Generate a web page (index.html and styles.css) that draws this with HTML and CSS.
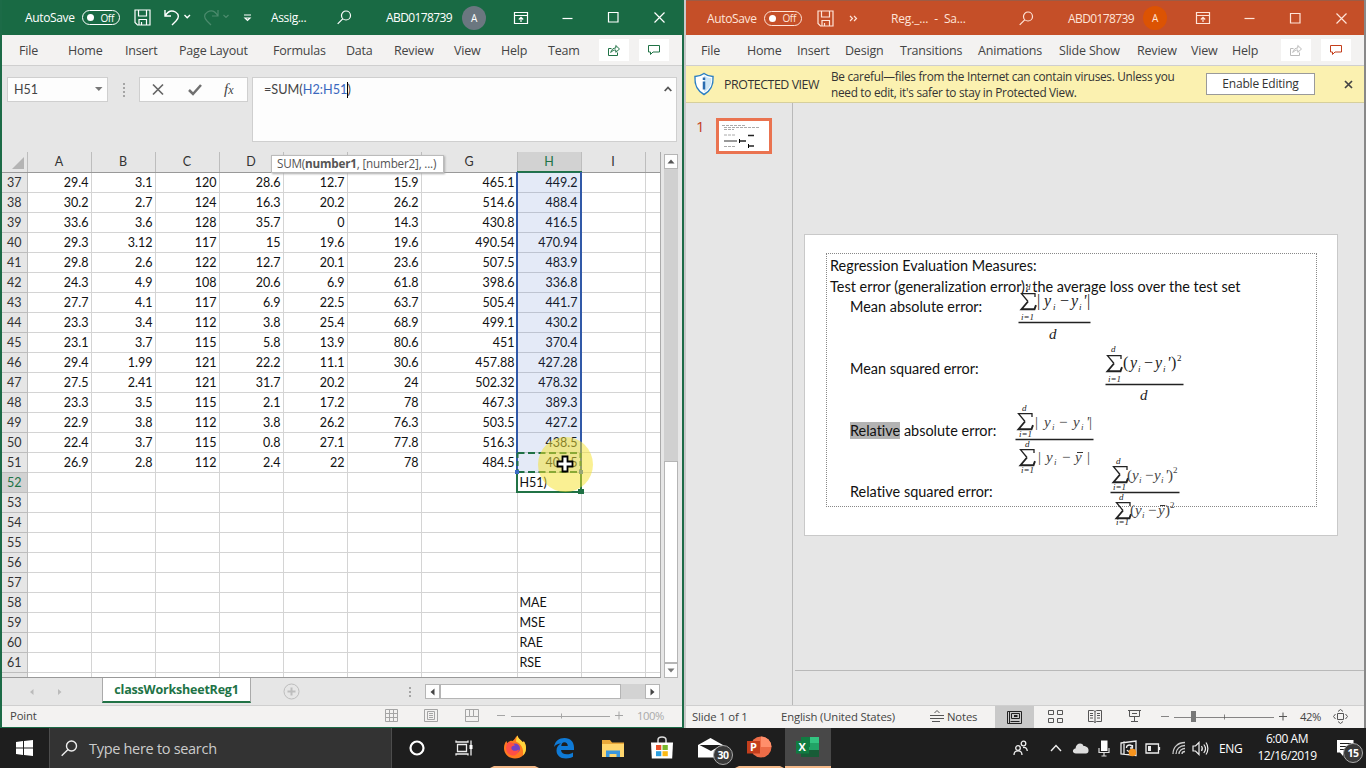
FILE: index.html
```html
<!DOCTYPE html>
<html lang="en">
<head>
<meta charset="utf-8">
<title>Desktop</title>
<link rel="stylesheet" href="styles.css">
</head>
<body>
<svg width="0" height="0" class="defs">
  <defs>
    <g id="i-save"><path d="M1 1h15v15H3.500L1 13.500z M4.500 1v6h8V1 M5 16v-5.500h7.500V16 M7.500 13v3"/></g>
    <g id="i-search"><circle cx="9" cy="5.500" r="4.500"/><path d="M5.700 8.800L.7 13.800"/></g>
    <g id="i-ribbon"><path d="M.5.500h13v11H.5z M.5 3.500h13 M7 10V5.500 M4.800 7.500L7 5.300l2.200 2.200"/></g>
    <g id="i-share"><path d="M3.500 4.500h-3v7h9V8.500 M2.800 8.500c.5-3 2.500-4.500 5-4.500V1.500L11.500 5 7.800 8.300V6c-2 0-3.500.5-5 2.500z"/></g>
    <g id="i-comment"><path d="M.5.500h11v6.500H5L2.500 9.500V7h-2z"/></g>
  </defs>
</svg>
<div class="desktop">
 <div class="windows">
  <section class="excel">
    <header class="title xl-title">
      <span class="as">AutoSave</span>
      <span class="toggle"><i></i>Off</span>
      <svg class="ic" width="17" height="17"><use href="#i-save"/></svg>
      <svg class="ic" width="28" height="17"><path d="M1 1v6h6 M1 7C4 2 8 1 11.500 3c4 2.500 3.500 6 .5 9l-4 4 M20.500 6l2.700 2.700L26 6" stroke-width="1.400"/></svg>
      <svg class="ic faint" width="28" height="17"><path d="M15 1v6H9 M15 7C12 2 8 1 4.500 3c-4 2.500-3.500 6-.5 9l4 4 M20.500 6l2.500 2.500L25.500 6"/></svg>
      <svg class="ic" width="9" height="8"><path d="M1 1h7 M2 4l2.500 2.500L7 4z"/></svg>
      <span class="doc">Assig...</span>
      <svg class="ic" width="15" height="15"><use href="#i-search"/></svg>
      <span class="user">ABD0178739</span>
      <b class="avatar">A</b>
      <svg class="ic" width="14" height="12"><use href="#i-ribbon"/></svg>
      <svg class="ic" width="11" height="12"><path d="M.5 6.500h10"/></svg>
      <svg class="ic" width="11" height="11"><path d="M.5.500h9.500v9.500H.5z"/></svg>
      <svg class="ic" width="11" height="11"><path d="M.5.500l10 10M10.500.500l-10 10"/></svg>
    </header>
    <nav class="menu xl-menu">
      <span>File</span><span>Home</span><span>Insert</span><span>Page Layout</span><span>Formulas</span><span>Data</span><span>Review</span><span>View</span><span>Help</span><span>Team</span>
      <b class="btn"><svg width="12" height="12"><use href="#i-share"/></svg></b>
      <b class="btn"><svg width="12" height="10"><use href="#i-comment"/></svg></b>
    </nav>
    <div class="formula">
      <div class="namebox"><span>H51</span><svg width="8" height="5"><path d="M0 0h7.500L3.800 4z" fill="#777"/></svg></div>
      <div class="dots"><i></i><i></i><i></i><i></i></div>
      <div class="fx">
        <svg width="12" height="11"><path d="M1 .5l10 10M11 .5l-10 10" stroke="#666" stroke-width="1.700" fill="none"/></svg>
        <svg width="14" height="11"><path d="M1 6l4 4 8-9" stroke="#707070" stroke-width="2.500" fill="none"/></svg>
        <em>f<small>x</small></em>
      </div>
      <div class="input"><span class="cal">=SUM(<i>H2:H51</i><u></u>)</span><svg width="8" height="6"><path d="M.7 5L4 1.500 7.300 5" fill="none" stroke="#555" stroke-width="1.800"/></svg></div>
      <div class="tip">SUM(<b>number1</b>, [number2], ...)</div>
    </div>
    <div class="sheetwrap">
      <div class="sheet">
        <table class="cells">
          <colgroup><col class="c0"><col class="c1"><col class="c1"><col class="c1"><col class="c1"><col class="c1"><col class="c6"><col class="c7"><col class="c1"><col class="c1"><col class="c10"></colgroup>
          <thead><tr><th class="corner"><svg width="12" height="12"><path d="M12 0v12H0z" fill="#b4b4b4"/></svg></th><th>A</th><th>B</th><th>C</th><th>D</th><th></th><th></th><th>G</th><th class="on">H</th><th>I</th><th></th></tr></thead>
          <tbody id="rows"></tbody>
        </table>
        <div class="range"></div>
        <div class="active"></div>
        <svg class="ants" width="68" height="44"><path d="M2.500 2h63 M2.500 21h63" stroke="#1f7145" stroke-width="2" stroke-dasharray="7 3.500"/><path d="M2.500 2v19 M65.500 2v19" stroke="#1f7145" stroke-width="2" stroke-dasharray="5 3"/><path d="M0 19h4v4H0z M64 19h4v4h-4z" fill="#3b6cc4"/><path d="M63 38h6v5h-6z" fill="#1f7145"/></svg>
        <div class="halo"></div>
        <svg class="cursor" width="18" height="18"><path d="M6.500 1.500h5v5h5v5h-5v5h-5v-5h-5v-5h5z" fill="#fff" stroke="#000" stroke-width="1.800"/></svg>
      </div>
      <div class="vscroll">
        <b><svg width="8" height="5"><path d="M4 .5L7.500 4.500h-7z" fill="#555"/></svg></b>
        <i></i><u></u>
        <b><svg width="8" height="5"><path d="M4 4.500L7.500.500h-7z" fill="#777"/></svg></b>
      </div>
    </div>
    <div class="tabs">
      <svg class="arrows" width="34" height="8"><path d="M4.500 1v6L1 4z M29 1v6l3.500-3z" fill="#bbb"/></svg>
      <b class="tab">classWorksheetReg1</b>
      <svg class="plus" width="17" height="17"><g fill="none" stroke="#bdbdbd"><circle cx="8.500" cy="8.500" r="7.500"/><path d="M8.500 4.500v8M4.500 8.500h8" stroke-width="2"/></g></svg>
      <div class="dots"><i></i><i></i><i></i></div>
      <div class="hscroll">
        <b><svg width="5" height="8"><path d="M4.500.500v7L.5 4z" fill="#444"/></svg></b><i></i><u></u>
        <b><svg width="5" height="8"><path d="M.5.500v7L4.500 4z" fill="#444"/></svg></b>
      </div>
    </div>
    <footer class="status xl-status">
      <span>Point</span>
      <svg width="13" height="13"><path d="M.5.500h12v12H.5zM.5 4.500h12M.5 8.500h12M4.500.500v12M8.500.500v12"/></svg>
      <svg width="14" height="13"><path d="M.5.500h13v12H.5zM3.500 2.500h7v8h-7zM5 4.500h4M5 6.500h4M5 8.500h4"/></svg>
      <svg width="14" height="13"><path d="M.5.500h13v12H.5zM4.500.500v7h-4M8.500.500v7h-4M8.500 7.500h5"/></svg>
      <svg width="127" height="13"><path d="M0 6.500h8M14 7.500h99M64.500 4.500v5M118 6.500h8M122 2.500v8"/></svg>
      <span class="pct">100%</span>
    </footer>
  </section>

  <section class="ppt">
    <header class="title pp-title">
      <span class="as">AutoSave</span>
      <span class="toggle"><i></i>Off</span>
      <svg class="ic" width="17" height="17"><use href="#i-save"/></svg>
      <svg class="ic" width="9" height="7"><path d="M1 1l2.500 2.500L1 6M5 1l2.500 2.500L5 6"/></svg>
      <span class="doc">Reg._...&nbsp; -&nbsp; Sa...</span>
      <svg class="ic" width="15" height="15"><use href="#i-search"/></svg>
      <span class="user">ABD0178739</span>
      <b class="avatar">A</b>
      <svg class="ic" width="14" height="12"><use href="#i-ribbon"/></svg>
      <svg class="ic" width="11" height="12"><path d="M.5 6.500h10"/></svg>
      <svg class="ic" width="11" height="11"><path d="M.5.500h9.500v9.500H.5z"/></svg>
      <svg class="ic" width="11" height="11"><path d="M.5.500l10 10M10.500.500l-10 10"/></svg>
    </header>
    <nav class="menu pp-menu">
      <span>File</span><span>Home</span><span>Insert</span><span>Design</span><span>Transitions</span><span>Animations</span><span>Slide Show</span><span>Review</span><span>View</span><span>Help</span>
      <b class="btn off"><svg width="12" height="12"><use href="#i-share"/></svg></b>
      <b class="btn"><svg width="12" height="10"><use href="#i-comment"/></svg></b>
    </nav>
    <div class="protect">
      <svg width="22" height="24"><path d="M11 1.500c3 2.200 6 3 9 3 .5 9-2 14-9 18-7-4-9.500-9-9-18 3 0 6-.8 9-3z" fill="#fff" stroke="#2b7fc3" stroke-width="1.500"/><path d="M11 3.500c2.500 1.700 4.800 2.500 7.300 2.600.2 7-1.800 11-7.300 14.200z" fill="#cfe6f5"/><path d="M11 9.500v8M11 5.500v2.500" stroke="#2b6cb0" stroke-width="2.500"/></svg>
      <span class="pv">PROTECTED VIEW</span>
      <span class="msg">Be careful—files from the Internet can contain viruses. Unless you<br>need to edit, it's safer to stay in Protected View.</span>
      <span class="enable">Enable Editing</span>
      <svg width="9" height="9"><path d="M1 1l7 7M8 1L1 8" stroke="#444" stroke-width="1.700"/></svg>
    </div>
    <div class="work">
      <aside class="thumbs"><span>1</span>
        <svg width="56" height="36"><path d="M1.500 1.500h53v33h-53z" fill="#fff" stroke="#ea7350" stroke-width="3"/><path d="M6 7.500h24M8 9.500h35M8 11.500h10" stroke="#aaa" stroke-dasharray="3 1"/><path d="M8 17h12M8 28.500h11" stroke="#aaa" stroke-dasharray="3 1"/><path d="M8 23h13" stroke="#333"/><path d="M32 17.500h6M23 23h7M32 28h6" stroke="#222" stroke-width="1.700"/><path d="M23.500 21v4M32.500 26v4" stroke="#000"/></svg>
      </aside>
      <div class="stage">
        <div class="canvas">
          <div class="slide">
            <div class="phold"></div>
            <p class="l1">Regression Evaluation Measures:</p>
            <p class="l2">Test error (generalization error): the average loss over the test set</p>
            <p class="l3">Mean absolute error:</p>
            <p class="l4">Mean squared error:</p>
            <p class="l5"><mark>Relative</mark> absolute error:</p>
            <p class="l6">Relative squared error:</p>
            <svg class="eq" width="531" height="299" viewBox="805 236 531 299">
              <g stroke="#222" stroke-width="1.300"><path d="M1018.500 323.500h72M1105.500 385.500h78M1015.500 440.500h78M1110.500 493.500h69"/></g>
              <g class="sg"><use href="#sg" x="1020" y="294"/><use href="#sg" x="1106" y="356"/><use href="#sg" x="1017" y="414"/><use href="#sg" x="1019" y="450"/><use href="#sg" x="1112" y="467"/><use href="#sg" x="1115" y="503"/></g>
              <g class="m s"><text x="1026" y="291">d</text><text x="1111" y="353">d</text><text x="1022" y="412">d</text><text x="1025" y="448">d</text><text x="1116" y="465">d</text><text x="1119" y="501">d</text></g>
              <g class="m s"><text x="1021" y="321">i=1</text><text x="1108" y="383">i=1</text><text x="1019" y="438">i=1</text><text x="1021" y="474">i=1</text><text x="1113" y="491">i=1</text><text x="1116" y="526">i=1</text></g>
              <g class="m"><text x="1049" y="340">d</text><text x="1140" y="401">d</text></g>
              <g class="m y"><text x="1037" y="307"><tspan class="r">|</tspan></text><text x="1044" y="307">y</text><text x="1059" y="307">−</text><text x="1071" y="307">y</text><text x="1083" y="307">'</text><text x="1087" y="307"><tspan class="r">|</tspan></text>
              <text x="1123" y="369"><tspan class="r">(</tspan></text><text x="1130" y="369">y</text><text x="1143" y="369">−</text><text x="1155" y="369">y</text><text x="1167" y="369">'</text><text x="1171" y="369"><tspan class="r">)</tspan></text></g>
              <g class="m s"><text x="1053" y="311">i</text><text x="1079" y="311">i</text><text x="1138" y="373">i</text><text x="1163" y="373">i</text><text x="1177" y="362" class="r">2</text></g>
              <g class="m y g"><text x="1035" y="428"><tspan class="r">|</tspan></text><text x="1044" y="428">y</text><text x="1058" y="428">−</text><text x="1073" y="428">y</text><text x="1086" y="428">'</text><text x="1089" y="428"><tspan class="r">|</tspan></text>
              <text x="1038" y="463"><tspan class="r">|</tspan></text><text x="1046" y="463">y</text><text x="1061" y="463">−</text><text x="1075" y="463">y</text><text x="1087" y="463"><tspan class="r">|</tspan></text>
              <text x="1127" y="481"><tspan class="r">(</tspan></text><text x="1132" y="481">y</text><text x="1144" y="481">−</text><text x="1154" y="481">y</text><text x="1165" y="481">'</text><text x="1168" y="481"><tspan class="r">)</tspan></text>
              <text x="1130" y="516"><tspan class="r">(</tspan></text><text x="1135" y="516">y</text><text x="1147" y="516">−</text><text x="1158" y="516">y</text><text x="1165" y="516"><tspan class="r">)</tspan></text></g>
              <g class="m s g"><text x="1052" y="431">i</text><text x="1081" y="431">i</text><text x="1054" y="466">i</text><text x="1139" y="484">i</text><text x="1161" y="484">i</text><text x="1142" y="519">i</text><text x="1173" y="474" class="r">2</text><text x="1170" y="509" class="r">2</text></g>
              <path d="M1077 453.500h6M1160 506.500h5" stroke="#333"/>
              <defs><g id="sg" fill="none"><path d="M15 4V.7H1.500L8 8.500"/><path d="M8 8.500L1.500 16.200H14.500l1.500-4" stroke-width="1.900"/></g></defs>
            </svg>
          </div>
        </div>
        <div class="notes"></div>
      </div>
    </div>
    <footer class="status pp-status">
      <span>Slide 1 of 1</span><span class="lang">English (United States)</span>
      <svg width="15" height="12"><path d="M0 5.500h14M0 8.500h14M2 11.500h8M4.500 3l2.500-2.500L9.500 3"/></svg><span>Notes</span>
      <b><svg width="15" height="13"><path d="M.5.500h14v12H.5zM4.500 2.500h8v5h-8zM3.500 10.500h9M7 4.500h3.500M7 5.500h3.500M2.500.500v12" stroke="#222"/></svg></b>
      <svg width="15" height="13"><path d="M.5.500h5v4h-5zM9.500.500h5v4h-5zM.5 8.500h5v4h-5zM9.500 8.500h5v4h-5z"/></svg>
      <svg width="14" height="13"><path d="M.5.500h5l1.500 1 1.500-1h5v11h-5L7 12.500l-1.500-1h-5zM7 1.500v11M2 3.500h3M2 5.500h3M2 8h3M9 3.500h3M9 5.500h3M9 8h3"/></svg>
      <svg width="14" height="13"><path d="M0 .5h13M1.500.500v6h10v-6M4 3.500h5M6.500 6.500v5M3 11.500h7"/></svg>
      <svg width="114" height="13"><path d="M0 6.500h8M13 7.500h100M63.500 4.500v5" opacity=".7"/><path d="M30 1h5v11h-5z" fill="#777" stroke="none"/></svg>
      <svg width="9" height="13"><path d="M0 6.500h8M4 2.500v8"/></svg>
      <span class="pct">42%</span>
      <svg width="15" height="15"><path d="M4.500 4.500h6v6h-6zM5 2.500L7.500.500 10 2.500M5 12.500l2.500 2 2.500-2M2.500 5L.5 7.500l2 2.500M12.500 5l2 2.500-2 2.500"/></svg>
    </footer>
  </section>
 </div>

 <div class="taskbar">
  <div class="start"><svg width="17" height="16"><path d="M0 2l7-1v6.500H0zM8 .9L17 0v7.500H8zM0 8.500h7V15l-7-1zM8 8.500h9V16l-9-1.100z" fill="#fff"/></svg></div>
  <div class="search"><svg width="17" height="17"><g fill="none" stroke="#eee" stroke-width="1.400"><circle cx="10.500" cy="6" r="5"/><path d="M7 9.500L.7 15.800"/></g></svg><span>Type here to search</span></div>
  <div class="app"><svg width="16" height="16"><circle cx="8" cy="8" r="6.500" fill="none" stroke="#fff" stroke-width="2.200"/></svg></div>
  <div class="app"><svg class="tv" width="18" height="16"><path d="M2.500 4.500h9v7h-9zM1 .5v1.500h12V.5M1 15.500V14h12v1.500M16 .5v15" fill="none" stroke="#eee" stroke-width="1.300"/><path d="M14.500 5h3v4h-3z" fill="#fff"/></svg></div>
  <div class="app run"><svg width="24" height="24"><path d="M12 23.500C5 23.500 1 18.500 1 13c0-3 1-5.500 2.500-7l.8 2.500C6 6 8 5.500 9.500 6c2-1 2.500-3.500 5-5.500.5 3 3 4 5 6.500l1.500-.5c1.500 2.500 2 4.500 2 6.500 0 6-4.500 10.500-11 10.500z" fill="#ff7a1f"/><path d="M14.500.500c.5 3 3 4 5 6.500l1.500-.5c1.500 2.500 2 4.500 2 6.500 0 3-1 5.500-3 7.500 1-7-2-12-7-14 .2-2.500.5-4.500 1.500-6z" fill="#ffd43b"/><circle cx="12" cy="13.500" r="5" fill="#7442c4"/><path d="M4 8c3-1.500 6-.5 8 2.500-3 0-4 1.500-3.500 3.500 1 2.500 5 2 7.500.5-.5 4-3.500 6.500-7 6-4-.7-6-4-6-8z" fill="#ff4f45"/></svg></div>
  <div class="app"><svg width="22" height="22"><path d="M1 10C2 4 6 1 11.500 1 17.500 1 21 5 21 10.500V13H8c.3 3 2.500 4.300 6 4.300 2.500 0 4.500-.8 6-1.800v4.300c-2 1-4 1.700-7 1.700C7 21.500 3.500 18 3.500 13.500c0-3 1.500-5.500 4.500-7C5 6.500 2.500 8 1 10zM8.300 9h6.500c0-2.500-1.500-3.800-3.400-3.800C9.500 5.200 8.400 6.700 8.300 9z" fill="#0f7ad6"/></svg></div>
  <div class="app"><svg width="22" height="19"><path d="M0 1h8l2 2.500h12V18H0z" fill="#e9a83a"/><path d="M0 5h22v13H0z" fill="#ffd66e"/><path d="M4 18v-6.500h14V18h-3.500v-3h-7v3z" fill="#3b97dd"/></svg></div>
  <div class="app"><svg width="24" height="24"><path d="M8 7V4c0-4 8-4 8 0v3" fill="none" stroke="#ddd" stroke-width="1.500"/><path d="M1 6.500h22l-.8 16H1.800z" fill="#fff"/><path d="M6 9h5.300v5H6z" fill="#e8502b"/><path d="M12.500 9h5.300v5h-5.300z" fill="#79b72c"/><path d="M6 15.200h5.300v5H6z" fill="#2a9fe0"/><path d="M12.500 15.200h5.300v5h-5.300z" fill="#fbb915"/></svg></div>
  <div class="app mail"><svg width="26" height="20"><path d="M0 7L12.500 0 25 7v12.500H0z" fill="#fff"/><path d="M1.500 7h22L13 13z" fill="#1e1e1e"/></svg><b class="badge">30</b></div>
  <div class="app run"><svg width="26" height="22"><circle cx="14" cy="11" r="10.500" fill="#ed6c47"/><path d="M14 .5A10.500 10.500 0 0 1 24.500 11H14z" fill="#ff8f6b"/><path d="M0 5h13v12.500H0z" fill="#c43e1c"/><text x="3" y="15" class="logo">P</text></svg></div>
  <div class="app run cur"><svg width="24" height="22"><path d="M5 1h18v20H5z" fill="#21a366"/><path d="M5 1h9v10H5z" fill="#107c41"/><path d="M14 1h9v6h-9z" fill="#33c481"/><path d="M5 14h18v7H5z" fill="#185c37"/><path d="M0 5h13v12.500H0z" fill="#107c41"/><text x="2.500" y="15" class="logo">X</text></svg></div>
  <div class="tray">
    <svg width="15" height="17"><g fill="none" stroke="#eee" stroke-width="1.300"><circle cx="5" cy="8" r="2.300"/><path d="M1 15c0-5.500 8-5.500 8 0"/><circle cx="10.500" cy="3.500" r="2.300"/><path d="M10 7.500c2.500-.7 4 1 4.300 3.500"/></g></svg>
    <svg width="12" height="8"><path d="M1 7l5-5.500L11 7" fill="none" stroke="#eee" stroke-width="1.400"/></svg>
    <svg width="17" height="12"><path d="M4 11.500C0 11.500 0 7 3.500 6.500 4 1 10 0 11.500 4c3.500 0 5.500 2.500 5 5 0 1.500-1 2.500-2.500 2.500z" fill="#ddd"/></svg>
    <svg width="12" height="17"><path d="M3 .5h6.500v10.500H3z" fill="#fff"/><path d="M1 8v4.500h10V8M6 12.500V16M3.500 16h5" fill="none" stroke="#ddd" stroke-width="1.200"/></svg>
    <svg width="18" height="17"><path d="M1 3l15-2v14.500L1 14zM4 1.500V15M6.500 8c0-4 6-4 6 0M12.500 5v3H10M12 9c-1 3-4 3-5 1" fill="none" stroke="#eee" stroke-width="1.300"/><circle cx="12.500" cy="12.500" r="3.800" fill="#f7941e"/></svg>
    <svg width="16" height="11"><path d="M1 1h12.500v9H1zM14.500 4v3" fill="none" stroke="#eee" stroke-width="1.300"/><path d="M3 3h3v5H3z" fill="#eee"/></svg>
    <svg width="14" height="14"><g fill="none" stroke="#ccc" stroke-width="1.300"><path d="M1 13C1 6 6 1.500 13 1.500M4 13c0-5 4-8.500 9-8.500M7 13c0-3.500 3-5.500 6-5.500M10 13c0-1.500 1-2.500 3-2.500"/></g></svg>
    <svg width="17" height="15"><path d="M1 5h2.500L7 1.500v12L3.500 10H1zM9.500 5c1 1.500 1 3.500 0 5M11.800 3.500c2 2.500 2 6 0 8.500M14 1.500c2.500 3.500 2.500 8.500 0 12" fill="none" stroke="#eee" stroke-width="1.200"/></svg>
    <span>ENG</span>
    <div class="clock">6:00 AM<br>12/16/2019</div>
    <div class="note"><svg width="17" height="17"><path d="M0 0h16.500v12.500H6V16l-3-3.500H0z" fill="#fff"/><path d="M3 3.500h11M3 6.500h11M3 9.500h8" stroke="#1e1e1e"/></svg><b class="badge">15</b></div>
  </div>
 </div>
</div>
<script src="sheet.js"></script>
</body>
</html>
```

FILE: sheet.js
```js
const data = [
  "29.4 3.1 120 28.6 12.7 15.9 465.1 449.2",
  "30.2 2.7 124 16.3 20.2 26.2 514.6 488.4",
  "33.6 3.6 128 35.7 0 14.3 430.8 416.5",
  "29.3 3.12 117 15 19.6 19.6 490.54 470.94",
  "29.8 2.6 122 12.7 20.1 23.6 507.5 483.9",
  "24.3 4.9 108 20.6 6.9 61.8 398.6 336.8",
  "27.7 4.1 117 6.9 22.5 63.7 505.4 441.7",
  "23.3 3.4 112 3.8 25.4 68.9 499.1 430.2",
  "23.1 3.7 115 5.8 13.9 80.6 451 370.4",
  "29.4 1.99 121 22.2 11.1 30.6 457.88 427.28",
  "27.5 2.41 121 31.7 20.2 24 502.32 478.32",
  "23.3 3.5 115 2.1 17.2 78 467.3 389.3",
  "22.9 3.8 112 3.8 26.2 76.3 503.5 427.2",
  "22.4 3.7 115 0.8 27.1 77.8 516.3 438.5",
  "26.9 2.8 112 2.4 22 78 484.5 406.5"
];
const labels = { 52: "H51)", 58: "MAE", 59: "MSE", 60: "RAE", 61: "RSE" };
const body = document.getElementById("rows");
for (let n = 37; n <= 62; n++) {
  const vals = (data[n - 37] || "").split(" ");
  let html = `<th class="${n === 52 ? "on" : ""}">${n < 62 ? n : ""}</th>`;
  for (let c = 0; c < 10; c++) {
    const label = c === 7 && labels[n];
    html += `<td${label ? ' class="txt"' : ""}>${label || vals[c] || ""}</td>`;
  }
  const tr = document.createElement("tr");
  tr.innerHTML = html;
  body.appendChild(tr);
}
```

FILE: styles.css
```css
* { box-sizing: border-box; }
body { margin: 0; width: 1366px; height: 768px; overflow: hidden; font: 12px "Open Sans", "Noto Sans", sans-serif; color: #444; background: #e6e6e6; }
p { margin: 0; }
svg { display: block; overflow: visible; flex: none; }
.defs { position: absolute; }
.desktop { height: 768px; display: flex; flex-direction: column; }
.windows { height: 728px; display: flex; }
.excel { width: 684px; border-left: 2px solid #1c6b47; border-right: 2px solid #1c6b47; border-bottom: 1px solid #1c6b47; display: flex; flex-direction: column; background: #e6e6e6; }
.ppt { width: 682px; border-left: 2px solid #c9c9c9; border-right: 2px solid #888; display: flex; flex-direction: column; background: #e6e6e6; }
.title { display: grid; align-items: center; height: 35px; color: #fff; flex: none; white-space: nowrap; font-size: 12px; letter-spacing: -.35px; }
.title .ic { fill: none; stroke: currentColor; stroke-width: 1.2; }
.title .faint { opacity: .22; }
.xl-title { background: #196a44; padding-left: 23px; grid-template-columns: 57px 52px 30px 39px 40px 28px 66px 49px 76px 52px 48px 46px 46px 20px; }
.pp-title { background: #c54f28; color: #ffe4d8; border-top: 1px solid #9d5b45; padding-left: 21px; grid-template-columns: 57px 53px 32px 42px 128px 49px 76px 52px 48px 46px 46px 20px; }
.pp-title .doc { letter-spacing: -.15px; }
.as { letter-spacing: -.35px; }
.user { letter-spacing: -.6px; }
.toggle { width: 38px; height: 15px; border: 1.5px solid currentColor; border-radius: 8px; display: flex; align-items: center; justify-content: space-between; padding: 0 5px 0 4px; font-size: 10px; letter-spacing: -.3px; }
.toggle i { width: 7px; height: 7px; border-radius: 50%; background: #fff; }
.avatar { width: 24px; height: 24px; border-radius: 50%; background: #6b7780; display: grid; place-items: center; font: 10px "Open Sans"; }
.pp-title .avatar { background: #dc5303; margin-left: -1px; }
.menu { display: grid; align-items: center; height: 31px; flex: none; background: #f3f2f1; border-bottom: 1px solid #cfcfcf; font-size: 12.500px; letter-spacing: -.2px; white-space: nowrap; }
.xl-menu { padding-left: 17px; grid-template-columns: 49px 57px 54px 94px 73px 48px 60px 47px 47px 51px 40px 30px; }
.pp-menu { padding-left: 15px; grid-template-columns: 46px 50px 48px 55px 78px 81px 78px 54px 41px 49px 40px 30px; }
.btn { width: 30px; height: 22px; background: #fff; display: grid; place-items: center; }
.btn svg { fill: none; stroke: #217346; }
.pp-menu .btn svg { stroke: #c43e1c; }
.pp-menu .off svg { stroke: #bbb; }
.formula { position: relative; display: flex; height: 86px; padding: 11px 5px 0 5px; flex: none; align-items: flex-start; }
.cal, .cells, .slide { font-family: Lato, sans-serif; font-variant-ligatures: none; }
.namebox { width: 101px; height: 25px; background: #fdfdfd; border: 1px solid #cfcfcf; display: flex; align-items: center; justify-content: space-between; padding: 0 4px 0 6px; font: 12.500px Lato; }
.dots { width: 31px; height: 25px; display: flex; flex-direction: column; align-items: center; justify-content: center; gap: 2px; }
.dots i { width: 2px; height: 2px; background: #a5a5a5; }
.fx { width: 109px; height: 25px; background: #fdfdfd; border: 1px solid #cfcfcf; display: grid; grid-template-columns: 36px 36px 20px; padding-left: 12px; align-items: center; }
.fx em { font: italic 15px "Liberation Serif"; color: #444; }
.fx small { font-size: 12px; }
.input { margin-left: 4px; width: 425px; height: 65px; background: #fdfdfd; border: 1px solid #cfcfcf; display: flex; justify-content: space-between; padding: 3px 4px 0 11px; font-size: 12.700px; }
.input svg { margin-top: 5px; }
.input i { font-style: normal; color: #3b68bd; }
.input u { display: inline-block; height: 16px; width: 1px; background: #000; vertical-align: -4px; margin-right: -1px; }
.tip { position: absolute; left: 269px; top: 89px; z-index: 5; width: 173px; height: 18px; line-height: 15px; background: #fff; border: 1px solid #bbb; box-shadow: 1px 1px 2px #aaa; padding-left: 5px; font-size: 11.700px; letter-spacing: -.2px; white-space: nowrap; color: #555; }
.sheetwrap { display: flex; height: 526px; flex: none; }
.sheet { position: relative; width: 659px; height: 526px; overflow: hidden; border-right: 1px solid #aaa; border-bottom: 1px solid #999; }
.cells { table-layout: fixed; width: 658px; border-collapse: collapse; background: #fff; font-size: 12.500px; color: #111; }
.c0 { width: 25px; } .c1 { width: 64px; } .c6 { width: 74px; } .c7 { width: 96px; } .c10 { width: 15px; }
.cells td, .cells th { height: 20px; padding: 0; line-height: 17px; border: 1px solid #d4d4d4; border-top: 0; border-left: 0; font-weight: 400; overflow: hidden; }
.cells td { text-align: right; padding-right: 2px; }
.cells td:nth-child(9) { padding-right: 3px; }
.cells td.txt { text-align: left; padding-left: 2px; }
.cells th { background: #e6e6e6; text-align: center; border-color: #bdbdbd; color: #333; }
.cells thead th { border-bottom-color: #999; }
.cells th.on { background: #d2d2d2; color: #217346; }
.cells thead th.on { border-bottom: 2px solid #217346; }
.corner svg { margin: 2px 0 0 10px; }
.range { position: absolute; left: 514px; top: 20px; width: 66px; height: 301px; border: solid #3159a8; border-width: 0 2px; background: rgba(49, 89, 190, .13); }
.active { position: absolute; left: 514px; top: 320px; width: 66px; height: 21px; border: 2px solid #217346; border-top: 0; }
.ants { position: absolute; left: 513px; top: 299px; }
.halo { position: absolute; left: 536px; top: 285px; width: 55px; height: 55px; border-radius: 50%; background: rgba(246, 226, 40, .5); }
.cursor { position: absolute; left: 554px; top: 303px; }
.vscroll { margin: 2px 0 0 3px; width: 14px; display: flex; flex-direction: column; background: #d3d3d3; height: 524px; }
.vscroll b, .hscroll b { background: #fdfdfd; border: 1px solid #b5b5b5; display: grid; place-items: center; flex: none; width: 15px; height: 15px; }
.vscroll b { width: 14px; }
.vscroll i { height: 292px; background: #d0d0d0; }
.vscroll u { flex: 1; background: #fff; border: 1px solid #b5b5b5; }
.tabs { display: flex; height: 27px; flex: none; align-items: center; }
.arrows { margin-left: 27px; }
.tab { align-self: flex-start; margin-left: 39px; width: 149px; height: 25px; background: #fff; border-bottom: 2px solid #217346; border-left: 1px solid #aaa; border-right: 1px solid #aaa; color: #217346; text-align: center; line-height: 24px; font-size: 12.500px; letter-spacing: -.2px; }
.plus { margin-left: 32px; }
.tabs .dots { margin-left: 94px; }
.hscroll { display: flex; width: 235px; margin-left: 0; background: #d3d3d3; height: 15px; }
.hscroll i { width: 181px; background: #fff; border: 1px solid #b5b5b5; }
.hscroll u { flex: 1; }
.status { flex: 1; background: #f3f2f1; border-top: 1px solid #cfcfcf; display: grid; align-items: center; font-size: 11.300px; white-space: nowrap; letter-spacing: -.15px; padding-bottom: 2px; }
.status svg { fill: none; stroke: #555; }
.xl-status { padding-left: 8px; grid-template-columns: 375px 39px 41px 32px 140px 30px; }
.xl-status svg { stroke: #a5a5a5; }
.xl-status .pct { color: #aaa; }
.pct { letter-spacing: -.5px; }
.pp-status { padding-left: 6px; grid-template-columns: 89px 149px 17px 48px 53px 40px 40px 33px 118px 21px 33px 16px; }
.pp-status b { background: #c9c9c9; width: 39px; height: 22px; margin-bottom: -2px; display: grid; place-items: center; }
.protect { height: 37px; flex: none; background: #fbf1b0; border-bottom: 1px solid #d6cf9c; display: flex; align-items: center; padding-left: 7px; color: #333; white-space: nowrap; }
.pv { margin-left: 9px; width: 107px; font-size: 12.400px; letter-spacing: -.45px; }
.msg { width: 375px; font-size: 11.800px; line-height: 16px; letter-spacing: -.28px; }
.enable { width: 109px; height: 22px; background: #fff; border: 1px solid #9a9a9a; text-align: center; line-height: 20px; font-size: 12px; margin-right: 29px; letter-spacing: -.2px; }
.work { display: flex; height: 602px; flex: none; }
.thumbs { width: 107px; border-right: 1px solid #b9b9b9; display: flex; padding: 15px 0 0 10px; align-items: flex-start; font-size: 15px; color: #c43e1c; line-height: 16px; }
.thumbs svg { margin-left: 11px; }
.stage { flex: 1; padding-left: 2px; display: flex; flex-direction: column; }
.canvas { height: 568px; border-bottom: 1px solid #b9b9b9; padding: 131px 0 0 9px; }
.slide { position: relative; width: 534px; height: 302px; background: #fff; border: 1px solid #c9c9c9; color: #111; font-size: 14.450px; white-space: nowrap; line-height: 20px; }
.slide p, .eq, .phold { position: absolute; }
.phold { left: 21px; top: 18px; width: 491px; height: 254px; border: 1px dotted #888; }
.eq { left: 0; top: 0; }
.l1, .l2 { left: 25px; } .l3, .l4, .l5, .l6 { left: 45px; }
.l1 { top: 21px; } .l2 { top: 42px; } .l3 { top: 62px; } .l4 { top: 124px; } .l5 { top: 186px; } .l6 { top: 247px; }
mark { background: #b3b3b3; color: #111; }
.m { font: italic 15px "Liberation Serif"; fill: #222; }
.s { font-size: 9px; }
.y { font-size: 16px; }
.g { fill: #444; }
.m.g.y { font-size: 15px; }
.r { font-style: normal; }
.sg { stroke: #222; stroke-width: 1.3; }
.taskbar { height: 40px; background: #1e1e1e; display: flex; color: #fff; }
.start { width: 49px; display: grid; place-items: center; }
.search { width: 343px; background: #333; border: 1px solid #4c4c4c; border-width: 0 1px; display: flex; align-items: center; gap: 11px; padding-left: 11px; font-size: 14.500px; letter-spacing: -.3px; color: #ccc; }
.app { width: 49px; display: grid; place-items: center; position: relative; padding-top: 0; }
.tv { position: relative; left: -2px; }
.run { border-bottom: 2px solid #f3b888; border-left: 4px solid #1e1e1e; border-right: 4px solid #1e1e1e; }
.cur { background: #484848; border-left-width: 0; border-right-width: 0; width: 46px; margin-left: 1px; }
.badge { position: absolute; left: 27px; top: 17px; width: 20px; height: 20px; border-radius: 50%; background: #3a3a3a; border: 1px solid #aaa; font-size: 10.500px; display: grid; place-items: center; letter-spacing: -.5px; }
.logo { font: bold 11px "Open Sans"; fill: #fff; }
.tray { margin-left: auto; width: 353px; display: grid; align-items: center; grid-template-columns: 37px 22px 26px 22px 25px 27px 20px 27px 31px 74px 1fr; }
.tray > span { font-size: 12px; letter-spacing: -.4px; }
.clock { text-align: center; font-size: 12px; line-height: 17px; letter-spacing: -.45px; margin-top: -2px; }
.note { position: relative; padding-left: 13px; }
.note .badge { left: 19px; top: 3px; }
```
